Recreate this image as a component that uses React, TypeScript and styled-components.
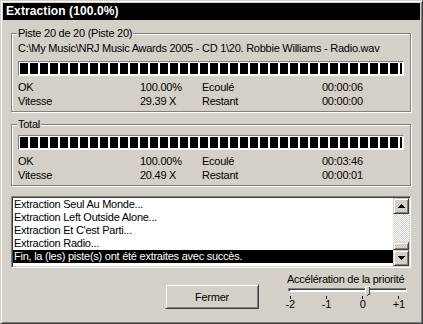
import styled, { createGlobalStyle } from 'styled-components'

const GlobalStyle = createGlobalStyle`
  html, body {
    margin: 0;
    padding: 0;
    background: #d4d0c8;
  }
`

const raised = `
  border: 1px solid;
  border-color: #d4d0c8 #404040 #404040 #d4d0c8;
  box-shadow: inset 1px 1px 0 #fff, inset -1px -1px 0 #808080;
  background: #d4d0c8;
`

const Window = styled.div`
  width: 423px;
  height: 324px;
  box-sizing: border-box;
  padding: 2px;
  display: flex;
  flex-direction: column;
  font: 11px "Liberation Sans", Arial, sans-serif;
  letter-spacing: -0.25px;
  color: #000;
  ${raised}
`

const TitleBar = styled.div`
  height: 17px;
  line-height: 17px;
  padding-left: 3px;
  background: #000;
  color: #fff;
  font-size: 12px;
  font-weight: bold;
  letter-spacing: 0.1px;
  white-space: nowrap;
`

const Body = styled.div`
  flex: 1;
  display: flex;
  flex-direction: column;
  padding: 13px 9px 0 8px;
`

const GroupBox = styled.div<{ $top: number; $mt?: number }>`
  position: relative;
  width: 400px;
  box-sizing: border-box;
  margin-top: ${(p) => p.$mt ?? 0}px;
  padding: ${(p) => p.$top}px 6px 3px;
  border: 1px solid #808080;
  box-shadow: 1px 1px 0 #fff, inset 1px 1px 0 #fff;
`

const Caption = styled.span`
  position: absolute;
  top: -7px;
  left: 5px;
  padding: 0 1px;
  line-height: 13px;
  background: #d4d0c8;
`

const PathLine = styled.div`
  line-height: 13px;
  margin-bottom: 6px;
  white-space: nowrap;
`

const Progress = styled.div`
  height: 15px;
  box-sizing: border-box;
  border: 1px solid;
  border-color: #808080 #fff #fff #808080;
  padding: 1px;
  background: #fff;
`

const Chunks = styled.div`
  height: 100%;
  background: repeating-linear-gradient(to right, #000 0 8px, transparent 8px 10px);
`

const Stats = styled.div`
  margin-top: 4px;
  display: grid;
  grid-template-columns: 122px 62px 120px auto;
  line-height: 14px;
  white-space: nowrap;
`

const ListBox = styled.div`
  margin-top: 10px;
  width: 400px;
  height: 72px;
  box-sizing: border-box;
  display: flex;
  padding: 1px;
  border: 1px solid;
  border-color: #808080 #fff #fff #808080;
  box-shadow: inset 1px 1px 0 #404040, inset -1px -1px 0 #d4d0c8;
  background: #fff;
`

const Items = styled.div`
  flex: 1;
  background: #fff;
`

const Item = styled.div<{ $sel?: boolean }>`
  line-height: 13px;
  padding-left: 1px;
  white-space: nowrap;
  background: ${(p) => (p.$sel ? '#000' : 'transparent')};
  color: ${(p) => (p.$sel ? '#fff' : '#000')};
`

const ScrollBar = styled.div`
  width: 16px;
  display: flex;
  flex-direction: column;
`

const ScrollBtn = styled.div`
  width: 16px;
  height: 16px;
  box-sizing: border-box;
  display: flex;
  align-items: center;
  justify-content: center;
  ${raised}
`

const Track = styled.div`
  flex: 1;
  display: flex;
  flex-direction: column;
  justify-content: flex-end;
  background: repeating-conic-gradient(#fff 0 25%, #d4d0c8 0 50%) 0 0 / 2px 2px;
`

const ScrollThumb = styled.div`
  height: 8px;
  box-sizing: border-box;
  ${raised}
`

const Footer = styled.div`
  flex: 1;
  display: flex;
  align-items: flex-start;
`

const Button = styled.button`
  margin: 16px 0 0 154px;
  width: 94px;
  height: 25px;
  padding: 0;
  font: inherit;
  letter-spacing: inherit;
  color: #000;
  ${raised}
`

const Priority = styled.div`
  margin: 5px 3px 0 auto;
  width: 121px;
  display: flex;
  flex-direction: column;
`

const PriorityLabel = styled.div`
  line-height: 13px;
  white-space: nowrap;
`

const SliderArea = styled.div`
  position: relative;
  height: 10px;
  padding-top: 2px;
  box-sizing: border-box;
`

const Groove = styled.div`
  margin-left: 1px;
  width: 119px;
  height: 4px;
  box-sizing: border-box;
  border: 1px solid;
  border-color: #808080 #fff #fff #808080;
  box-shadow: inset 1px 1px 0 #404040;
  background: #fff;
`

const SliderThumb = styled.svg`
  position: absolute;
  top: 0;
`

const TickRow = styled.div`
  margin-left: -6px;
  display: flex;
  gap: 18px;
`

const TickCol = styled.div`
  width: 20px;
  display: flex;
  flex-direction: column;
  align-items: center;
`

const Tick = styled.div`
  width: 1px;
  height: 3px;
  background: #000;
`

const TickLabel = styled.div`
  line-height: 11px;
`

const Arrow = ({ up }: { up?: boolean }) => (
  <svg width="7" height="4" shapeRendering="crispEdges">
    <polygon points={up ? '3.5,0 7,4 0,4' : '0,0 7,0 3.5,4'} fill="#000" />
  </svg>
)

const log = [
  'Extraction Seul Au Monde...',
  'Extraction Left Outside Alone...',
  "Extraction Et C'est Parti...",
  'Extraction Radio...',
  'Fin, la (les) piste(s) ont été extraites avec succès.',
]

const ticks = ['-2', '-1', '0', '+1']
const priority = 2

export default function App() {
  return (
    <>
      <GlobalStyle />
      <Window>
        <TitleBar>Extraction (100.0%)</TitleBar>
        <Body>
          <GroupBox $top={8}>
            <Caption>Piste 20 de 20 (Piste 20)</Caption>
            <PathLine>C:\My Music\NRJ Music Awards 2005 - CD 1\20. Robbie Williams - Radio.wav</PathLine>
            <Progress>
              <Chunks />
            </Progress>
            <Stats>
              <span>OK</span>
              <span>100.00%</span>
              <span>Ecoulé</span>
              <span>00:00:06</span>
              <span>Vitesse</span>
              <span>29.39 X</span>
              <span>Restant</span>
              <span>00:00:00</span>
            </Stats>
          </GroupBox>

          <GroupBox $top={10} $mt={12}>
            <Caption>Total</Caption>
            <Progress>
              <Chunks />
            </Progress>
            <Stats>
              <span>OK</span>
              <span>100.00%</span>
              <span>Ecoulé</span>
              <span>00:03:46</span>
              <span>Vitesse</span>
              <span>20.49 X</span>
              <span>Restant</span>
              <span>00:00:01</span>
            </Stats>
          </GroupBox>

          <ListBox>
            <Items>
              {log.map((line, i) => (
                <Item key={i} $sel={i === log.length - 1}>
                  {line}
                </Item>
              ))}
            </Items>
            <ScrollBar>
              <ScrollBtn>
                <Arrow up />
              </ScrollBtn>
              <Track>
                <ScrollThumb />
              </Track>
              <ScrollBtn>
                <Arrow />
              </ScrollBtn>
            </ScrollBar>
          </ListBox>

          <Footer>
            <Button>Fermer</Button>
            <Priority>
              <PriorityLabel>Accélération de la priorité</PriorityLabel>
              <SliderArea>
                <Groove />
                <SliderThumb
                  width="5"
                  height="10"
                  shapeRendering="crispEdges"
                  style={{ left: 4 + priority * 38 - 2 }}
                >
                  <polygon points="0,0 5,0 5,8 2.5,10 0,8" fill="#d4d0c8" />
                  <polyline points="0.5,8 0.5,0.5 4.5,0.5" fill="none" stroke="#fff" />
                  <polyline points="4.5,0.5 4.5,8 2.5,9.5" fill="none" stroke="#404040" />
                </SliderThumb>
              </SliderArea>
              <TickRow>
                {ticks.map((t) => (
                  <TickCol key={t}>
                    <Tick />
                    <TickLabel>{t}</TickLabel>
                  </TickCol>
                ))}
              </TickRow>
            </Priority>
          </Footer>
        </Body>
      </Window>
    </>
  )
}
